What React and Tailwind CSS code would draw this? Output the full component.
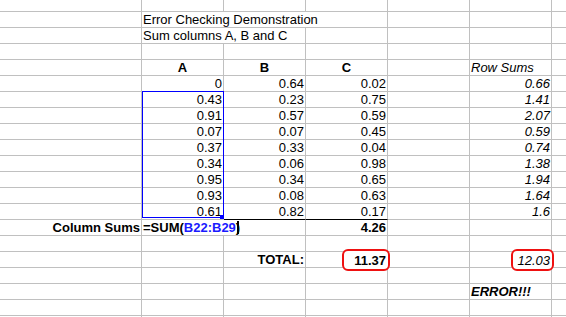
import React from "react";

function Cell({ w = "w-[82px]", b = "border-b-[#c0c0c0]", cls = "", children }) {
  return (
    <div
      className={`${w} shrink-0 h-full border-r border-b border-r-[#c0c0c0] ${b} px-[1px] whitespace-nowrap overflow-visible leading-[15px] ${cls}`}
    >
      {children}
    </div>
  );
}

function Last({ b = "border-b-[#c0c0c0]" }) {
  return <div className={`flex-1 h-full border-b ${b}`} />;
}

function EmptyRow({ h = "h-[16px]" }) {
  return (
    <div className={`flex ${h}`}>
      <Cell w="w-[142px]" />
      <Cell />
      <Cell />
      <Cell />
      <Cell />
      <Cell />
      <Last />
    </div>
  );
}

const data = [
  ["0", "0.64", "0.02", "0.66"],
  ["0.43", "0.23", "0.75", "1.41"],
  ["0.91", "0.57", "0.59", "2.07"],
  ["0.07", "0.07", "0.45", "0.59"],
  ["0.37", "0.33", "0.04", "0.74"],
  ["0.34", "0.06", "0.98", "1.38"],
  ["0.95", "0.34", "0.65", "1.94"],
  ["0.93", "0.08", "0.63", "1.64"],
  ["0.61", "0.82", "0.17", "1.6"],
];

export default function App() {
  return (
    <div className="relative w-[566px] h-[317px] overflow-hidden bg-white text-black text-[13px] font-['Liberation_Sans',Arial,sans-serif]">
      <EmptyRow h="h-[12px]" />
      <div className="flex h-[16px]">
        <Cell w="w-[142px]" />
        <Cell w="w-[246px]">Error Checking Demonstration</Cell>
        <Cell />
        <Cell />
        <Last />
      </div>
      <div className="flex h-[16px]">
        <Cell w="w-[142px]" />
        <Cell w="w-[164px]">Sum columns A, B and C</Cell>
        <Cell />
        <Cell />
        <Cell />
        <Last />
      </div>
      <EmptyRow />
      <div className="flex h-[16px]">
        <Cell w="w-[142px]" />
        <Cell cls="font-bold text-center">A</Cell>
        <Cell cls="font-bold text-center">B</Cell>
        <Cell cls="font-bold text-center">C</Cell>
        <Cell />
        <Cell cls="italic">Row Sums</Cell>
        <Last />
      </div>
      {data.map((r, i) => {
        const lastRow = i === data.length - 1;
        return (
          <div key={i} className="flex h-[16px]">
            <Cell w="w-[142px]" />
            <Cell cls="text-right">{r[0]}</Cell>
            <Cell cls="text-right" b={lastRow ? "border-b-black" : "border-b-[#c0c0c0]"}>
              {r[1]}
            </Cell>
            <Cell cls="text-right" b={lastRow ? "border-b-black" : "border-b-[#c0c0c0]"}>
              {r[2]}
            </Cell>
            <Cell />
            <Cell cls="text-right italic">{r[3]}</Cell>
            <Last />
          </div>
        );
      })}
      <div className="flex h-[16px]">
        <Cell w="w-[142px]" cls="font-bold text-right">Column Sums</Cell>
        <Cell w="w-[164px]" cls="font-bold">
          =SUM(<span className="text-[#1a1aff]">B22:B29</span>)
        </Cell>
        <Cell cls="font-bold text-right">4.26</Cell>
        <Cell />
        <Cell />
        <Last />
      </div>
      <EmptyRow />
      <div className="flex h-[16px]">
        <Cell w="w-[142px]" />
        <Cell />
        <Cell cls="font-bold text-right">TOTAL:</Cell>
        <Cell />
        <Cell />
        <Cell />
        <Last />
      </div>
      <EmptyRow />
      <div className="flex h-[16px]">
        <Cell w="w-[142px]" />
        <Cell />
        <Cell />
        <Cell />
        <Cell />
        <Cell cls="font-bold italic">ERROR!!!</Cell>
        <Last />
      </div>
      <EmptyRow />
      <EmptyRow />

      {/* reference selection box */}
      <div className="absolute left-[142px] top-[91px] w-[82px] h-[127px] border border-[#0000ff] pointer-events-none" />
      <div className="absolute left-[220px] top-[215px] w-[4px] h-[4px] bg-[#0000ff]" />
      {/* text cursor */}
      <div className="absolute left-[237px] top-[221px] w-[2px] h-[13px] bg-black" />

      {/* red annotation boxes */}
      <div className="absolute left-[342px] top-[249px] w-[48px] h-[22px] border-2 border-[#ee1111] rounded-[6px] bg-white flex items-center justify-end pr-[2px] font-bold leading-[15px]">
        11.37
      </div>
      <div className="absolute left-[511px] top-[249px] w-[43px] h-[22px] border-2 border-[#ee1111] rounded-[6px] bg-white flex items-center justify-end pr-[2px] italic leading-[15px]">
        12.03
      </div>
    </div>
  );
}
